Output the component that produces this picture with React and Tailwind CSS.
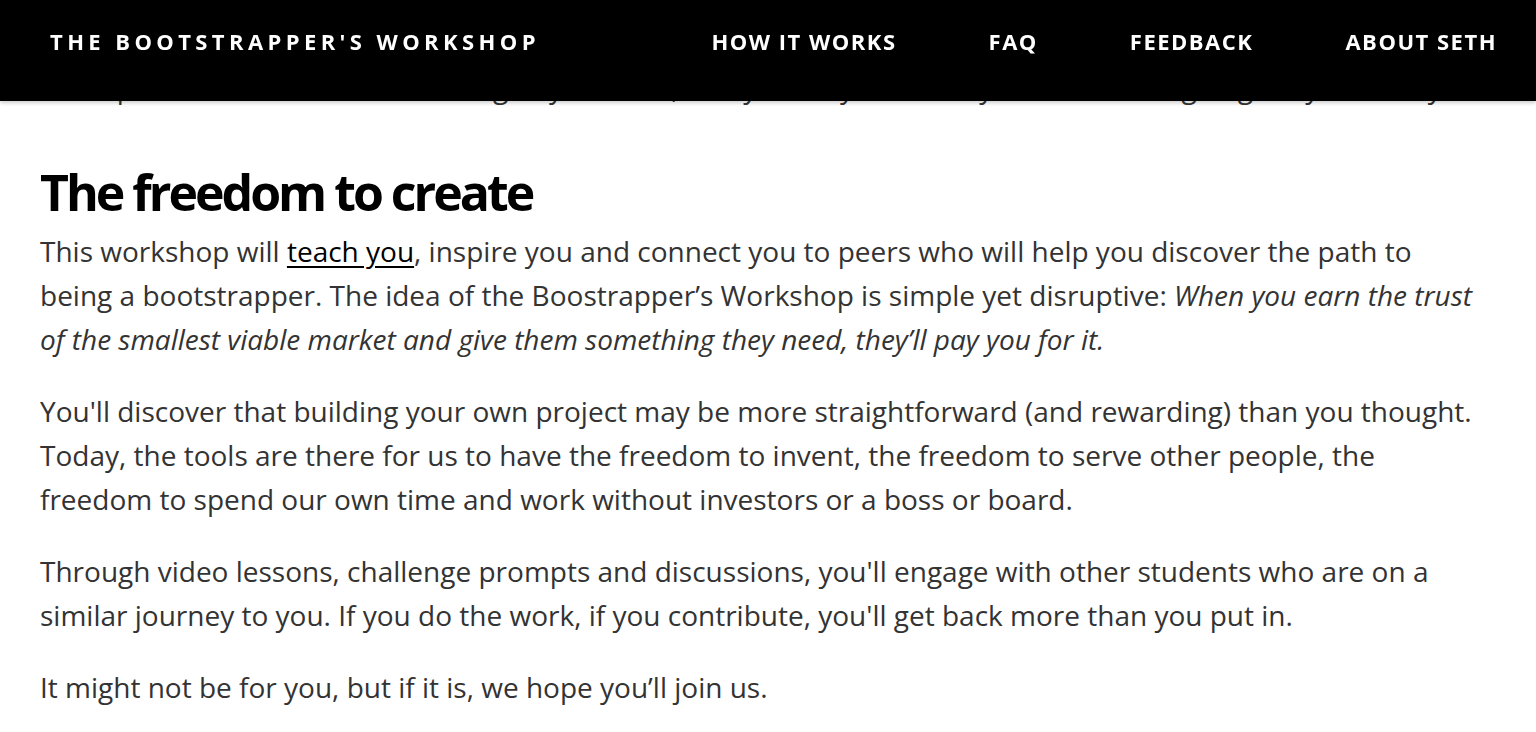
import React from 'react';

const navItems = ['HOW IT WORKS', 'FAQ', 'FEEDBACK', 'ABOUT SETH'];

const Header = () => (
  <header className="fixed top-0 inset-x-0 z-10 h-[101px] bg-black shadow-[0_2px_4px_rgba(0,0,0,0.2)] flex items-start justify-between pt-[30px] pl-[50px] pr-[39px] font-['Open_Sans',sans-serif] text-white">
    <div className="text-[22px] font-bold tracking-[4.4px] leading-none">THE BOOTSTRAPPER'S WORKSHOP</div>
    <nav className="flex items-start gap-[92px]">
      {navItems.map((item) => (
        <a key={item} href="#" className="text-[22px] font-bold tracking-[1.5px] leading-none">
          {item}
        </a>
      ))}
    </nav>
  </header>
);

const App = () => {
  return (
    <div className="min-h-screen bg-white font-['Open_Sans',sans-serif] text-[#333]">
      <Header />
      <main className="pt-[65px] pl-10 pr-[56px] text-[28px] leading-[44px]">
        <p className="whitespace-nowrap overflow-hidden">
          Perhaps it’s time to build something of your own, and you may find that you have more going for you than you thought.
        </p>

        <h2 className="mt-[53px] mb-[7px] text-[50px] leading-[60px] font-bold tracking-[-3px] text-black">
          The freedom to create
        </h2>
        <p>
          This workshop will{' '}
          <a href="#" className="text-black underline underline-offset-[4px]">teach you</a>, inspire you and connect you to peers who will help you discover the path to being a bootstrapper. The idea of the Boostrapper’s Workshop is simple yet disruptive:{' '}
          <em>When you earn the trust of the smallest viable market and give them something they need, they’ll pay you for it.</em>
        </p>

        <p className="mt-[28px]">
          You'll discover that building your own project may be more straightforward (and rewarding) than you thought. Today, the tools are there for us to have the freedom to invent, the freedom to serve other people, the freedom to spend our own time and work without investors or a boss or board.
        </p>

        <p className="mt-[28px]">
          Through video lessons, challenge prompts and discussions, you'll engage with other students who are on a similar journey to you. If you do the work, if you contribute, you'll get back more than you put in.
        </p>

        <p className="mt-[28px]">It might not be for you, but if it is, we hope you’ll join us.</p>
      </main>
    </div>
  );
};

export default App;
